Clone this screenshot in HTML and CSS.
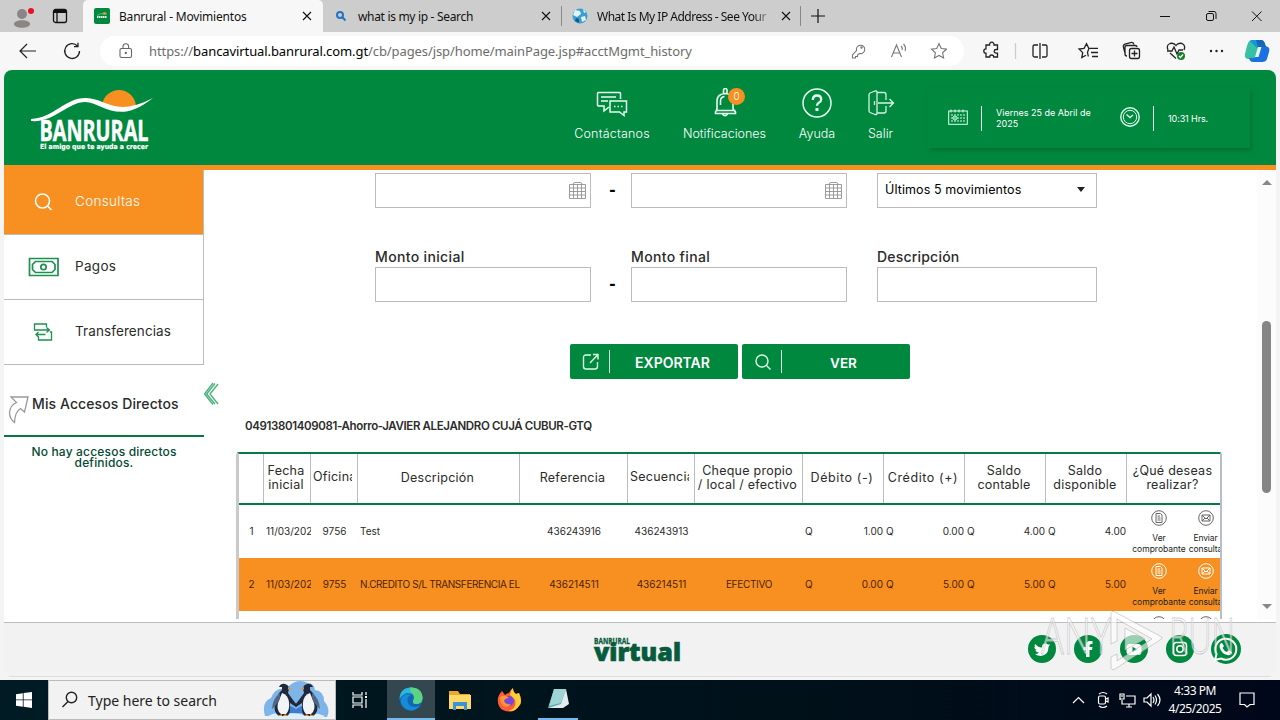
FILE: index.html
```html
<!DOCTYPE html>
<html lang="es">
<head>
<meta charset="utf-8">
<title>Banrural - Movimientos</title>
<link rel="stylesheet" href="styles.css">
</head>
<body>
<div class="tabs">
  <svg class="profile" viewBox="0 0 24 26"><circle cx="10" cy="11" r="5" fill="#8b8583"/><path d="M2 21c0-5 16-5 16 0 0 5-16 5-16 0z" fill="#8b8583"/><circle cx="19" cy="8" r="3" fill="#e81123"/></svg>
  <svg class="workspace" viewBox="0 0 16 16" fill="none" stroke="#111" stroke-width="1.3"><rect x="1.5" y="1.5" width="13" height="13" rx="2"/><path d="M2 3.5h12" stroke-width="3"/><path d="M5 4v10"/></svg>
  <div class="tab tab-active">
    <svg class="fav" viewBox="0 0 16 16"><rect width="16" height="16" rx="2" fill="#00883f"/><path d="M8.500 6a2 2 0 0 1 4 0z" fill="#f79020"/><path d="M3 7.500q4-3 6-1.500t4-.5" stroke="#8fc98f" fill="none" stroke-width=".7"/><path d="M3 9h10" stroke="#d9f0df" stroke-width="2" stroke-dasharray="1.500 .4"/></svg>
    <span class="tabtext t1">Banrural - Movimientos</span>
    <svg class="x" viewBox="0 0 10 10"><path d="M1 1l8 8M9 1l-8 8"/></svg>
  </div>
  <div class="tab tab2">
    <svg class="fav small" viewBox="0 0 12 12" fill="none" stroke="#2373c5" stroke-width="2"><circle cx="5" cy="5" r="3"/><path d="M7.300 7.300l3.200 3.200"/></svg>
    <span class="tabtext t2">what is my ip - Search</span>
    <svg class="x" viewBox="0 0 10 10"><path d="M1 1l8 8M9 1l-8 8"/></svg>
  </div>
  <div class="tab tab3">
    <svg class="fav" viewBox="0 0 16 16"><circle cx="8" cy="8" r="7.500" fill="#3c9fd0"/><path d="M3 2l5 1 1 3-4 3-4-2zM9 9l4-1 1 4-4 2zM11 1l3 3-2 1z" fill="#e2f3f7"/><path d="M4 10l3 1v4l-4-2z" fill="#175a91"/></svg>
    <span class="tabtext t3">What Is My IP Address - See Your</span>
    <svg class="x" viewBox="0 0 10 10"><path d="M1 1l8 8M9 1l-8 8"/></svg>
  </div>
  <svg class="newtab" viewBox="0 0 14 14"><path d="M7 0v14M0 7h14" stroke="#111" stroke-width="1.200"/></svg>
  <svg class="winbtns" viewBox="0 0 104 12" fill="none" stroke="#111"><path d="M1 6.500h10"/><rect x="47.500" y="3.500" width="7" height="7" rx="1.500"/><path d="M49.500 1.500h5.500q2 0 2 2v5.500"/><path d="M93 1.500l9.500 9.500M102.500 1.500L93 11"/></svg>
</div>
<div class="toolbar">
  <svg class="back" viewBox="0 0 18 16" fill="none" stroke="#222" stroke-width="1.200"><path d="M8 1L1 8l7 7M1 8h16"/></svg>
  <svg class="reload" viewBox="0 0 18 18" fill="none" stroke="#222" stroke-width="1.300"><path d="M14.500 4A7.400 7.400 0 1 0 16.500 9M15 .8V4.600H11"/></svg>
  <div class="address">
    <svg class="lock" viewBox="0 0 14 16" fill="none" stroke="#666" stroke-width="1.100"><rect x="1" y="5.500" width="11.500" height="9" rx="1.500"/><path d="M4 5V3.500a2.800 2.800 0 0 1 5.600 0V5"/><circle cx="6.800" cy="10" r=".6" fill="#666"/></svg>
    <span class="url">https://<b>bancavirtual.banrural.com.gt</b>/cb/pages/jsp/home/mainPage.jsp#acctMgmt_history</span>
    <svg class="addricons" viewBox="0 0 96 18" fill="none" stroke="#777" stroke-width="1.100"><path d="M5.500 8.500a4.200 4.200 0 1 1 3 3L6.500 13v1.500H4.500V16H1.500v-3z"/><circle cx="10.500" cy="5.500" r=".7"/><path d="M40.500 15L45.500 3l5 12M42.500 11h6M50 4q2 2 1 4M52.500 2q3 3 1.500 7"/><path d="M88 1.500l2.300 5 5.200.6-3.900 3.700 1 5.200-4.600-2.600-4.600 2.600 1-5.200-3.900-3.700 5.200-.6z"/></svg>
  </div>
  <svg class="tools" viewBox="0 0 290 24" fill="none" stroke="#222" stroke-width="1.300">
    <path d="M5 6h3.500a2.300 2.300 0 1 1 4.500 0h3.500v4.500h-1.500a1.800 1.800 0 1 0 0 3.600h1.500V18H12.700a2 2 0 0 0-4 0H5v-3.800a2.200 2.200 0 1 1 0-4.400z"/>
    <path d="M34.500 4v16" stroke="#ccc"/>
    <path d="M57 6h-3.500q-1.500 0-1.500 1.500v9q0 1.500 1.500 1.500H57M61 6h3.500q1.500 0 1.500 1.500v9q0 1.500-1.500 1.500H61M59 4v16"/>
    <path d="M105 16.300l-4.200 2.300.9-5-3.700-3.600 5.100-.7L105.500 4.600l2.300 4.700H117M110 13.500h7M111 17.500h6M108 9.300l-1.500 4 .8 4.200"/>
    <rect x="148.500" y="9.500" width="10" height="10" rx="2"/><path d="M153.500 11.500v6M150.500 14.500h6M146 17q-2 0-2-2V8.500q0-2 2-2h8q2 0 2 1.500M144 14l-1.600-6q-.4-2 1.600-2.800l6.500-1.800q2-.3 2.500 2"/>
    <path d="M187 11q-2-5 2-6.500 4-1 6 2 2-3 6-2 4 2 2 6.500M189 14l6 5.500M186 12h5l2-4 3 7 2-4h4"/>
    <circle cx="200" cy="17" r="4" fill="#15802b" stroke="none"/><path d="M198 17l1.500 1.500 2.500-3" stroke="#fff"/>
    <g fill="#222" stroke="none"><circle cx="230" cy="12" r="1.200"/><circle cx="235.500" cy="12" r="1.200"/><circle cx="241" cy="12" r="1.200"/></g>
    <g stroke="none" transform="translate(-1 0)"><path d="M272 1h9q3 0 4 4l1 4h-5q-3 0-4 3l-2 7h-5q-5 0-4-5l2-8q1-5 4-5z" fill="#1695d8"/><path d="M270 2q-2 1-3 5l-2 8q-1 5 4 5h4q3 0 4-4l1-6z" fill="#36c0a4"/><path d="M288 8q2 1 1 5l-2 7q-1 3-5 3h-9q-3 0-4-4h4q3 0 4-3l2-7q1-3 4-3z" fill="#1972df"/><path d="M276 1h5q3 0 4 4l1 3h-8z" fill="#1668b5"/><path d="M278 8h3.500l-3 10H275z" fill="#e8f6fc"/></g>
  </svg>
</div>
<div class="page">
  <div class="frame">
    <header class="head">
      <svg class="logo" viewBox="0 0 124 64">
        <path d="M71 17a17 17 0 0 1 34 2q-18 5-34-2z" fill="#f79020"/>
        <path d="M0 30C23 29 33 9 55 9c20 0 28 20 67 0-35 28-49 5-68 4C37 13 23 34 0 32z" fill="#fff"/>
        <text class="logo-name" x="8.500" y="51.500" textLength="109" lengthAdjust="spacingAndGlyphs">BANRURAL</text>
        <text class="logo-sub" x="9" y="60" textLength="108" lengthAdjust="spacingAndGlyphs">El amigo que te ayuda a crecer</text>
      </svg>
      <nav class="nav">
        <div class="navitem n1"><svg viewBox="0 0 32 30" fill="none" stroke="#e5fff0" stroke-width="1.500"><path d="M13 19l-5 4V18H2.500q-1 0-1-1V5.500q0-1 1-1h21q1 0 1 1V11M5 9h15M5 13h7"/><path d="M14 13h16.500v11H28v3.500L23.500 24H14z"/><path d="M18 18.500h1.500M21.500 18.500H23M25 18.500h1.500"/></svg><span>Contáctanos</span></div>
        <div class="navitem n2"><svg viewBox="0 0 32 30" fill="none" stroke="#e5fff0" stroke-width="1.600"><path d="M14.500 6V2.500q0-2 1.800-2t1.700 2V6M8 21V13q0-7 8.200-7.500Q24 6 24 13v8l2.500 3v1.500h-20V24zM11.500 17v-4q0-4 4-4.500M6.500 22.500h20M13.500 26q2.500 3.500 5 0"/></svg><i class="badge">0</i><span>Notificaciones</span></div>
        <div class="navitem n3"><svg viewBox="0 0 32 30" fill="none" stroke="#e5fff0" stroke-width="1.500"><circle cx="16" cy="15" r="14"/><path d="M11.800 12q0-4.500 4.200-4.500t4.200 4q0 2-2.400 3.200-1.800 1-1.800 3" stroke-width="2.300"/><path d="M16 20v3" stroke-width="3"/></svg><span>Ayuda</span></div>
        <div class="navitem n4"><svg viewBox="0 0 32 30" fill="none" stroke="#d4f5e2" stroke-width="1.300"><path d="M5 5l5-2q2-.5 2 1.500v20.500q0 2-2 1.500l-5-2q-1-.5-1-2V7q0-1.500 1-2zM12 4.500h7q2 0 2 2V12M12 25h7q2 0 2-2v-5M13 15h15.500M24.500 11l4 4-4 4M9.500 13v4"/></svg><span>Salir</span></div>
      </nav>
      <div class="infobox">
        <svg class="cal" viewBox="0 0 20 16" fill="none" stroke="#d8ffe9"><rect x=".7" y="2" width="18.600" height="13.300"/><path d="M3 .5v3M7 .5v3M11 .5v3M15 .5v3"/><path d="M3 6h14M3 9h14M3 12h14" stroke-dasharray="2 1"/><circle cx="7" cy="9" r="2"/></svg>
        <i class="bar"></i><span class="date">Viernes 25 de Abril de<br>2025</span>
        <svg class="clock" viewBox="0 0 20 20" fill="none" stroke="#d8ffe9"><circle cx="10" cy="10" r="9.200" stroke-width="1.400"/><circle cx="10" cy="10" r="6.700"/><path d="M6.500 7.500L10 10.500 13 8" stroke-width="1.500"/></svg>
        <i class="bar"></i><span class="time">10:31 Hrs.</span>
      </div>
    </header>
    <div class="content">
      <aside class="side">
        <div class="menu active"><svg viewBox="0 0 32 24" fill="none" stroke="#fff" stroke-width="1.600"><circle cx="14.500" cy="11" r="7"/><path d="M19.500 16l4 4"/></svg><span class="m1">Consultas</span></div>
        <div class="menu"><svg viewBox="0 0 32 24" fill="none" stroke="#1c914f" stroke-width="1.700"><path d="M1.500 3.500h28.500v17h-28.500z"/><path d="M7.500 6.500h16.500l3 3v5l-3 3h-16.500l-3-3v-5z"/><circle cx="15.500" cy="12" r="2.700"/></svg><span class="m2">Pagos</span></div>
        <div class="menu"><svg viewBox="0 0 32 24" fill="none" stroke="#1c914f" stroke-width="1.300"><path d="M18.500 7V4H6.500v6H21M18.500 7.500L21.500 10l-3 2.500M22 12h1.500v8h-13v-3.500M8 14.500h9.500M10.500 12L8 14.500l2.500 2.500"/></svg><span class="m3">Transferencias</span></div>
        <div class="shortcuts"><svg viewBox="0 0 22 28" fill="none" stroke="#999" stroke-width="1.300"><path d="M4 1h17L17.500 16l-4-3.500q-5.500 3-6 14-5-4-5-10 .5-7 7-10z"/></svg><span>Mis Accesos Directos</span></div>
        <div class="none">No hay accesos directos<br>definidos.</div>
      </aside>
      <main class="main">
        <svg class="collapse" viewBox="0 0 16 24" fill="none" stroke="#4db27d" stroke-width="1.400"><path d="M10 1L1.500 12 10 22.500M12 1.500L3.700 12 12 22M15 2L7 12l8 10"/></svg>
        <div class="filters">
          <div class="input"><svg viewBox="0 0 18 18"><use href="#grid"/></svg></div><span class="dash">-</span>
          <div class="input"><svg viewBox="0 0 18 18"><g id="grid" fill="none" stroke="#929292" stroke-width=".9"><path d="M.5 2.500h16v14H.5zM4.500 2.500v14M8.500 2.500v14M12.500 2.500v14M.5 6h16M.5 9.500h16M.5 13h16M4 2.500q0-2 2-2h5q2 0 2 2"/></g></svg></div><i></i>
          <div class="input select"><span>Últimos 5 movimientos</span><i class="caret"></i></div>
        </div>
        <div class="filters labels"><label class="l1">Monto inicial</label><i></i><label class="l2">Monto final</label><i></i><label class="l3">Descripción</label></div>
        <div class="filters"><div class="input"></div><span class="dash">-</span><div class="input"></div><i></i><div class="input"></div></div>
        <div class="buttons">
          <div class="btn"><svg viewBox="0 0 18 18" fill="none" stroke="#d8ffe6" stroke-width="1.400"><path d="M9 2H4Q1.500 2 1.500 4.500v9Q1.500 16 4 16h9q2.500 0 2.500-2.500V9M11 1.500h5v5M16 1.500L8 10"/></svg><i></i><span class="b1">EXPORTAR</span></div>
          <div class="btn"><svg viewBox="0 0 18 18" fill="none" stroke="#d8ffe6" stroke-width="1.400"><circle cx="8" cy="8" r="6"/><path d="M12.500 12.500l4 4"/></svg><i></i><span class="b2">VER</span></div>
        </div>
        <div class="account">04913801409081-Ahorro-JAVIER ALEJANDRO CUJÁ CUBUR-GTQ</div>
        <div class="table">
          <div class="row thead">
            <div></div><div><span>Fecha<br>inicial</span></div><div class="cut"><span>Oficina</span></div><div>Descripción</div><div>Referencia</div><div class="cut"><span>Secuencia</span></div><div><span>Cheque propio<br>/ local / efectivo</span></div><div class="wide">Débito (-)</div><div class="wide">Crédito (+)</div><div><span>Saldo<br>contable</span></div><div><span>Saldo<br>disponible</span></div><div><span>¿Qué deseas<br>realizar?</span></div>
          </div>
          <div class="row">
            <div>1</div><div class="left">11/03/2025</div><div>9756</div><div class="left">Test</div><div>436243916</div><div>436243913</div><div></div><div class="money"><span>Q</span><span>1.00</span></div><div class="money"><span>Q</span><span>0.00</span></div><div class="money"><span>Q</span><span>4.00</span></div><div class="money"><span>Q</span><span>4.00</span></div>
            <div class="acts"><div class="act"><svg viewBox="0 0 16 16"><use href="#doc"/></svg>Ver<br>comprobante</div><div class="act a2"><svg viewBox="0 0 16 16"><use href="#mail"/></svg>Enviar<br>consulta</div></div>
          </div>
          <div class="row alt">
            <div>2</div><div class="left">11/03/2025</div><div>9755</div><div class="left desc">N.CREDITO S/L TRANSFERENCIA EL</div><div>436214511</div><div>436214511</div><div class="efe">EFECTIVO</div><div class="money"><span>Q</span><span>0.00</span></div><div class="money"><span>Q</span><span>5.00</span></div><div class="money"><span>Q</span><span>5.00</span></div><div class="money"><span>Q</span><span>5.00</span></div>
            <div class="acts"><div class="act"><svg viewBox="0 0 16 16"><use href="#doc"/></svg>Ver<br>comprobante</div><div class="act a2"><svg viewBox="0 0 16 16"><use href="#mail"/></svg>Enviar<br>consulta</div></div>
          </div>
          <div class="row">
            <div></div><div></div><div></div><div></div><div></div><div></div><div></div><div></div><div></div><div></div><div></div>
            <div class="acts"><div class="act"><svg viewBox="0 0 16 16"><g id="doc"><circle cx="8" cy="8" r="7.300"/><path d="M5 3.500h4.500L11 5v7.500H5zM6.500 6H9M6.500 8h3M6.500 10h3"/></g></svg></div><div class="act a2"><svg viewBox="0 0 16 16"><g id="mail"><circle cx="8" cy="8" r="7.300"/><path d="M4 5h8v6H4zM4 5l4 4 4-4M4 11l3-3M12 11L9 8"/></g></svg></div></div>
          </div>
        </div>
        <div class="scroll"><i class="up"></i><i class="thumb"></i><i class="down"></i></div>
      </main>
    </div>
    <footer class="foot">
      <svg class="virtual" viewBox="0 0 90 28"><text class="v1" x="1" y="7.500" textLength="36" lengthAdjust="spacingAndGlyphs">BANRURAL</text><text class="v2" x="1" y="24.500" textLength="87" lengthAdjust="spacingAndGlyphs">virtual</text></svg>
      <div class="social">
        <svg viewBox="0 0 30 30"><circle cx="15" cy="15" r="14" fill="#00883f"/><path d="M8 10q4 4 7 3.500 0-4 3-4 2 0 3 1h2l-1.500 2.500q0 8-7.500 9-3.500 0-6-2 3 0 4-1.500-3 0-3.500-2.500h1.500q-3-1-2.500-3.500l1 .5Q7 12 8 10z" fill="#fff"/></svg>
        <svg viewBox="0 0 30 30"><circle cx="15" cy="15" r="14" fill="#00883f"/><path d="M13 23v-7h-2.500v-3H13v-2q0-4 4-4h2.500v3H18q-1.500 0-1.500 1.500V13h3l-.5 3h-2.500v7z" fill="#fff"/></svg>
        <svg viewBox="0 0 30 30"><circle cx="15" cy="15" r="14" fill="#00883f"/><rect x="7.500" y="10" width="15" height="11" rx="3.500" fill="#fff"/><path d="M13.500 12.800v5.400l4.500-2.700z" fill="#00883f"/></svg>
        <svg viewBox="0 0 30 30"><circle cx="15" cy="15" r="14" fill="#00883f"/><g fill="none" stroke="#fff" stroke-width="1.500"><rect x="8.500" y="8.500" width="13" height="13" rx="3"/><circle cx="15" cy="15" r="3.200"/><path d="M18 11h1.200"/></g></svg>
        <svg class="wa" viewBox="0 0 30 30"><circle cx="15" cy="15" r="15" fill="#00883f"/><path d="M4 26l1.500-6a10.500 10.500 0 1 1 4.500 4.500z" fill="none" stroke="#fff" stroke-width="2"/><path d="M11 9l2 3-1.500 2q1.500 3 4.500 4l1.500-2 3.500 2q-1 4-4.500 3-6-1-8-8 0-4 2.500-4z" fill="#fff"/></svg>
      </div>
    </footer>
  </div>
</div>
<div class="taskbar">
  <svg class="start" viewBox="0 0 16 16" fill="#fff"><path d="M0 2.200l6.800-1v6.300H0zM7.600 1.100L16 0v7.500H7.600zM0 8.300h6.800v6.400l-6.800-1zM7.600 8.300H16V16l-8.400-1.200z"/></svg>
  <div class="search">
    <svg class="mag" viewBox="0 0 18 18" fill="none" stroke="#222" stroke-width="1.400"><circle cx="10.500" cy="6.500" r="5.200"/><path d="M7 10.500L1.500 16"/></svg>
    <span>Type here to search</span>
    <svg class="penguins" viewBox="0 0 66 38"><path d="M2 35q-4-14 6-18 4-11 15-9 10-12 22-6 6 0 7 7 9 1 9 11 7 8 3 16z" fill="#7db5e8"/><path d="M26 24l7 4 7-4 4 8H22z" fill="#3f7dcc"/><path d="M5 35q9-5 16-2 12-2 20 1 10-4 21 1l-6 3H12z" fill="#dceefa"/><g id="penguin"><path d="M16 6q2-4 6-3 4 1 4 5l-1 4 5 7 4 5-1 2-6-4v7q0 4-3 6h-8q-6-4-4-11l4-12 3-3v-3z" fill="#20283b"/><path d="M19 12q6 2 7 9 1 8-3 12h-5q-5-4-3-11z" fill="#f1f4f7"/><path d="M25 6l4 2-4 .5zM14 35h5v-2zM20 35h5l-3-2z" fill="#ed8b30"/><path d="M17 12q-7 5-8 16 6-5 8-11z" fill="#4e6681"/></g><use href="#penguin" transform="translate(66 0) scale(-1 1)"/></svg>
  </div>
  <div class="app"><svg class="ico16" viewBox="0 0 18 18" fill="none" stroke="#fff" stroke-width="1.200"><path d="M2 1v3h9V1M2 17v-3h9v3M2 6h9v6H2zM15 1v3M15 8v9"/><path d="M14 6h2" stroke-width="2"/></svg></div>
  <div class="app edge"><svg viewBox="0 0 24 24"><circle cx="12" cy="12" r="11.500" fill="#1267b5"/><path d="M.5 12Q1 .5 12.500.5 23 1 23.500 11q0 6-7 6-4-1-2-4 2-7-6-7-5 1-8 6z" fill="#28b7dd"/><path d="M11 .5q12-.5 12.500 10.500 0 6-7 6-4-1-2-4 2-5-3-8z" fill="#5bd583"/><path d="M2 12q4-7 10-4-5 2-3 8 3 6 12 3-7 7-14 3-6-4-5-10z" fill="#168bd6"/></svg></div>
  <div class="app"><svg viewBox="0 0 24 24"><path d="M1 3h9l2 3h10v15H1z" fill="#e9a82e"/><path d="M1 7h22v14H1z" fill="#ffd867"/><path d="M5 14h14v8h-3v-4H8v4H5z" fill="#3c93d4"/></svg></div>
  <div class="app"><svg viewBox="0 0 24 24"><path d="M5 3l3 4q2-2 4-2 1-3 4-5 0 4 3 6l3-1q4 9 0 13-4 6-10 5.500Q1 23 .8 12 1 7 5 3z" fill="#ff5b3a"/><path d="M16 0q0 4 3 6l3-1q4 9 0 13-4 6-10 5 8-3 6-11-3-4-5-5 0-4 3-7z" fill="#ffcd35"/><circle cx="12" cy="13" r="5" fill="#7547da"/><path d="M3 9q5-3 9 1-4 0-5 3 2 4 7 3-3 4-8 2Q3 15 3 9z" fill="#ff9634"/></svg></div>
  <div class="app note"><svg viewBox="0 0 24 24"><path d="M8 2h12l-4 17-14 2z" fill="#53a9b3"/><path d="M8 2h12l-5 14-12 3z" fill="#9ed4d4"/><path d="M20 2l3 15-6 4H2l13-4z" fill="#e4eced"/></svg></div>
  <div class="tray">
    <svg viewBox="0 0 90 18" fill="none" stroke="#fff" stroke-width="1.200"><path d="M1 12l5.500-5.500L12 12"/><rect x="26.500" y="5" width="7" height="8" rx="1.500"/><path d="M34 8l2-1v4l-2-1M27 3q4-3 8 0M27 15q4 3 8 0"/><path d="M54 5h9v8H50V9M54 16h6M57 13v3M48 9V3h4v5h-4M50 4v2"/><path d="M72 7h3l4-4v12l-4-4h-3zM81 6q2 3 0 6M83 4.500q3 4.500 0 9M85.500 3q5 6 0 12"/></svg>
    <span class="when">4:33 PM<br>4/25/2025</span>
    <svg class="notif" viewBox="0 0 16 16" fill="none" stroke="#fff" stroke-width="1.200"><path d="M1 1h14v11.500h-4L8 15l-2.500-2.500H1z"/></svg>
  </div>
</div>
<svg class="watermark" viewBox="0 0 196 66">
  <g class="wm"><text x="0" y="45" textLength="70" lengthAdjust="spacingAndGlyphs">ANY</text><text x="128" y="45" textLength="66" lengthAdjust="spacingAndGlyphs">RUN</text><path fill-rule="evenodd" d="M70 5q0-4 4-2l45 24q4 2 0 4L74 60q-4 2-4-2V48l6-3v7l35-22-35-20v22l-6 3zM84 19v22l20-11z"/></g>
</svg>
</body>
</html>
```
FILE: styles.css
```css
* { box-sizing: border-box; }
body { margin: 0; width: 1280px; height: 720px; overflow: hidden; display: flex; flex-direction: column; font-family: Inter, sans-serif; color: #2b2b2b; background: #f7f7f7; }
svg { display: block; flex: none; }
i { font-style: normal; }
.tabs { height: 32px; flex: none; display: flex; align-items: center; background: #cdcdcd; font: 12px "Noto Sans", sans-serif; color: #111; }
.profile { width: 24px; height: 26px; margin-left: 12px; }
.workspace { width: 16px; height: 16px; margin-left: 16px; }
.tab { height: 32px; display: flex; align-items: center; flex: none; white-space: nowrap; padding-left: 11px; }
.tab-active { margin-left: 15px; width: 240px; background: #f7f7f7; border-radius: 5px 5px 0 0; }
.fav { width: 16px; height: 16px; margin-right: 9px; }
.small { width: 12px; height: 12px; margin-right: 11px; }
.x { width: 10px; height: 10px; stroke: #111; stroke-width: 1.1; }
.tabtext { flex: none; }
.t1 { width: 183px; letter-spacing: -.2px; }
.tab2 { width: 239px; padding-left: 12px; }
.t2 { width: 183px; letter-spacing: -.32px; }
.tab3 { width: 240px; height: 20px; border-left: 1px solid #888; border-right: 1px solid #888; padding-left: 10px; margin-left: -1px; }
.t3 { width: 173px; margin-right: 11px; letter-spacing: -.5px; mask-image: linear-gradient(90deg, #000 90%, rgba(0,0,0,.2)); }
.newtab { width: 14px; height: 14px; margin-left: 10px; }
.winbtns { width: 104px; height: 12px; margin-left: auto; margin-right: 17px; }
.toolbar { height: 38px; flex: none; display: flex; align-items: center; background: #f7f7f7; }
.back { width: 18px; height: 16px; margin-left: 19px; }
.reload { width: 18px; height: 18px; margin-left: 26px; }
.address { width: 864px; height: 30px; margin-left: 19px; border-radius: 15px; background: #fff; display: flex; align-items: center; padding-left: 19px; }
.lock { width: 14px; height: 16px; margin-right: 16px; }
.url { font: 13px "Noto Sans", sans-serif; color: #6c6c6c; width: 620px; white-space: nowrap; letter-spacing: -.09px; }
.url b { font-weight: 400; color: #000; }
.addricons { width: 96px; height: 18px; margin-left: 82px; }
.tools { width: 290px; height: 24px; margin-left: 17px; overflow: visible; }
.page { height: 610px; flex: none; padding: 0 4px; background: #f4f4f4; }
.frame { height: 607px; background: #fff; border-radius: 8px; overflow: hidden; }
.head { height: 100px; background: #00883f; border-bottom: 5px solid #f79020; display: flex; }
.logo { width: 124px; height: 64px; margin: 19px 0 0 27px; }
.logo-name { font: 700 28px "Open Sans", sans-serif; fill: #fff; stroke: #fff; stroke-width: .5; }
.logo-sub { font: 700 7px "DejaVu Sans", sans-serif; fill: #fff; stroke: #fff; stroke-width: .2; }
.nav { display: flex; gap: 33px; margin: 18px 0 0 419px; }
.navitem { color: #fff; font-size: 12.5px; font-weight: 300; display: flex; flex-direction: column; align-items: center; position: relative; white-space: nowrap; }
.navitem svg { width: 32px; height: 30px; margin-bottom: 8px; }
.n1 { width: 76px; letter-spacing: .2px; }
.n2 { width: 83px; }
.n3 { width: 36px; }
.n4 { width: 25px; }
.badge { position: absolute; left: 45px; top: 0; width: 17px; height: 17px; border-radius: 50%; background: #f79020; font-size: 10px; line-height: 17px; text-align: center; }
.infobox { margin: 18px 0 0 35px; width: 322px; height: 60px; box-shadow: 2px 3px 4px #00742f; display: flex; align-items: center; padding-left: 20px; color: #fff; font-size: 9px; line-height: 11px; white-space: nowrap; }
.cal { width: 20px; height: 16px; margin-top: -3px; }
.bar { width: 1px; height: 25px; background: #e5fff0; margin: 0 14px 0 13px; }
.date { width: 124px; }
.clock { width: 20px; height: 20px; margin-top: -3px; }
.time { letter-spacing: -.1px; }
.content { height: 452px; display: flex; }
.side { width: 200px; flex: none; }
.menu { height: 65px; border-right: 1px solid #bcbcbc; border-bottom: 1px solid #bcbcbc; display: flex; align-items: center; padding-left: 24px; font-size: 13.5px; }
.active { background: #f79020; color: #fff; font-weight: 300; }
.menu svg { width: 32px; height: 24px; margin-right: 15px; }
.menu span { margin-top: -3px; white-space: nowrap; }
.menu .m1 { letter-spacing: .3px; }
.menu .m2 { letter-spacing: .3px; }
.menu .m3 { letter-spacing: .1px; }
.shortcuts { height: 72px; border-bottom: 2px solid #08783f; display: flex; align-items: center; padding: 6px 0 0 3px; font-size: 14px; font-weight: 500; letter-spacing: .1px; white-space: nowrap; }
.shortcuts svg { width: 22px; height: 28px; margin: 13px 3px 0 0; }
.none { margin-top: 9px; text-align: center; font-size: 12px; line-height: 11px; color: #064935; font-weight: 500; letter-spacing: .18px; white-space: nowrap; }
.main { position: relative; width: 1072px; height: 449px; overflow: hidden; padding-top: 3px; }
.collapse { position: absolute; left: -1px; top: 212px; width: 16px; height: 24px; }
.filters { display: grid; grid-template-columns: 216px 40px 216px 30px 220px; margin-left: 171px; height: 35px; }
.input { border: 1px solid #bcbcbc; height: 35px; display: flex; align-items: center; justify-content: flex-end; padding-right: 3px; }
.input svg { width: 18px; height: 18px; }
.dash { font: 700 19px/34px "Liberation Sans", sans-serif; color: #000; text-align: center; padding-left: 3px; }
.select { justify-content: flex-start; font-size: 12.5px; padding: 0 11px 2px 7px; color: #000; letter-spacing: .1px; white-space: nowrap; }
.caret { margin-left: auto; border: 4px solid transparent; border-top: 5px solid #222; border-bottom: 0; }
.labels { height: 20px; margin-top: 39px; font-size: 14px; line-height: 20px; font-weight: 500; }
.l1, .l2 { letter-spacing: .35px; }
.l3 { letter-spacing: .2px; }
.buttons { display: flex; gap: 4px; margin: 42px 0 0 366px; }
.btn { width: 168px; height: 35px; background: #00883f; border-radius: 2px; color: #fff; font-size: 14px; font-weight: 600; display: flex; align-items: center; }
.btn svg { width: 18px; height: 18px; margin: 0 9px 0 12px; }
.btn i { width: 1px; height: 23px; background: #d8ffe6; }
.btn span { flex: 1; text-align: center; padding: 2px 3px 0 0; }
.btn .b2 { padding-right: 5px; font-size: 13.5px; }
.account { margin: 39px 0 0 41px; height: 16px; line-height: 16px; font-size: 11.5px; font-weight: 600; letter-spacing: -.36px; white-space: nowrap; }
.table { width: 986px; height: 200px; margin: 18px 0 0 32px; border-left: 3px solid #c9c9c9; border-right: 2px solid #b6bfc5; border-top: 2px solid #08784a; border-radius: 3px 3px 0 0; }
.row { display: grid; grid-template-columns: 25px 47px 47px 162px 108px 67px 108px 81px 81px 81px 81px 93px; height: 53px; font-size: 10px; }
.row > div { display: flex; align-items: center; justify-content: center; overflow: hidden; white-space: nowrap; text-align: center; min-width: 0; padding-bottom: 2px; }
.row.thead { height: 51px; border-bottom: 2px solid #08784a; font-size: 12.5px; line-height: 14px; letter-spacing: .25px; }
.thead > div { border-right: 1px solid #bcbcbc; padding-right: 2px; }
.thead > div:last-child { border-right: 0; }
.thead > .wide { letter-spacing: .6px; }
.row.thead > .cut { justify-content: flex-start; padding: 0 5px 3px 2px; }
.cut span { overflow: hidden; }
.row > .left { justify-content: flex-start; padding-left: 2px; }
.row > .desc { letter-spacing: -.4px; }
.row > .efe { letter-spacing: -.3px; }
.row > .money { justify-content: space-between; padding: 0 1px 2px 2px; }
.alt { background: #f79020; color: #4d2305; }
.row > .acts { justify-content: flex-start; font-size: 8.5px; line-height: 11px; color: #222; padding: 0; }
.act { width: 54px; margin-left: 5px; height: 53px; padding-top: 5px; flex: none; }
.act svg { width: 16px; height: 16px; margin: 0 auto 7px; fill: none; stroke: #666; }
.alt .act svg { stroke: #fff; }
.act.a2 { width: 39px; margin-left: 0; letter-spacing: -.1px; }
.scroll { position: absolute; right: 0; top: 0; width: 19px; height: 449px; background: #fcfcfc; display: flex; flex-direction: column; align-items: center; }
.up, .down { border: 5px solid transparent; }
.up { border-top: 0; border-bottom: 5px solid #888; margin-top: 10px; }
.down { border-bottom: 0; border-top: 5px solid #888; margin-top: 111px; }
.thumb { width: 9px; height: 172px; border-radius: 5px; background: #858585; margin-top: 136px; }
.foot { height: 55px; background: #f2f2f2; border-top: 1px solid #b8bec2; border-bottom: 1px solid #ddd; display: flex; }
.virtual { width: 90px; height: 28px; margin: 13px 0 0 589px; }
.v1 { font: 700 8.5px "Open Sans", sans-serif; fill: #075b3d; stroke: #075b3d; stroke-width: .3; }
.v2 { font: 800 25px "Open Sans", sans-serif; fill: #075b3d; stroke: #075b3d; stroke-width: .7; }
.social { display: flex; gap: 16px; margin: 11px 0 0 344px; }
.social svg { width: 30px; height: 30px; }
.taskbar { height: 40px; flex: none; display: flex; align-items: center; background: linear-gradient(90deg, #001b24, #001019 65%, #00071a); color: #fff; }
.start { width: 16px; height: 16px; margin: 0 16px; }
.search { width: 288px; height: 40px; background: #f2f2f2; border: 1px solid #bbb; color: #222; display: flex; align-items: center; font: 14px "Noto Sans", sans-serif; }
.mag { width: 18px; height: 18px; margin: 0 9px 0 12px; }
.search span { width: 175px; white-space: nowrap; }
.penguins { width: 66px; height: 38px; }
.app { width: 48px; height: 40px; display: flex; align-items: center; justify-content: center; margin-right: 1px; }
.app svg { width: 24px; height: 24px; }
.app .ico16 { width: 18px; height: 18px; }
.edge { background: #34474f; border-bottom: 2px solid #76b9ed; margin-left: 2px; }
.note { border-bottom: 2px solid #76b9ed; width: 40px; margin-left: 4px; }
.tray { margin-left: auto; display: flex; align-items: center; font: 12px/18px "Noto Sans", sans-serif; text-align: center; }
.tray svg { width: 90px; height: 18px; }
.when { width: 60px; margin: 0 14px 0 3px; letter-spacing: -.45px; }
.tray .notif { width: 16px; height: 16px; margin-right: 25px; }
.watermark { position: absolute; left: 1041px; top: 609px; width: 196px; height: 66px; }
.wm { fill: rgba(255,255,255,.6); stroke: rgba(160,160,160,.5); stroke-width: .9; font: 300 50px "Open Sans", sans-serif; }
```
